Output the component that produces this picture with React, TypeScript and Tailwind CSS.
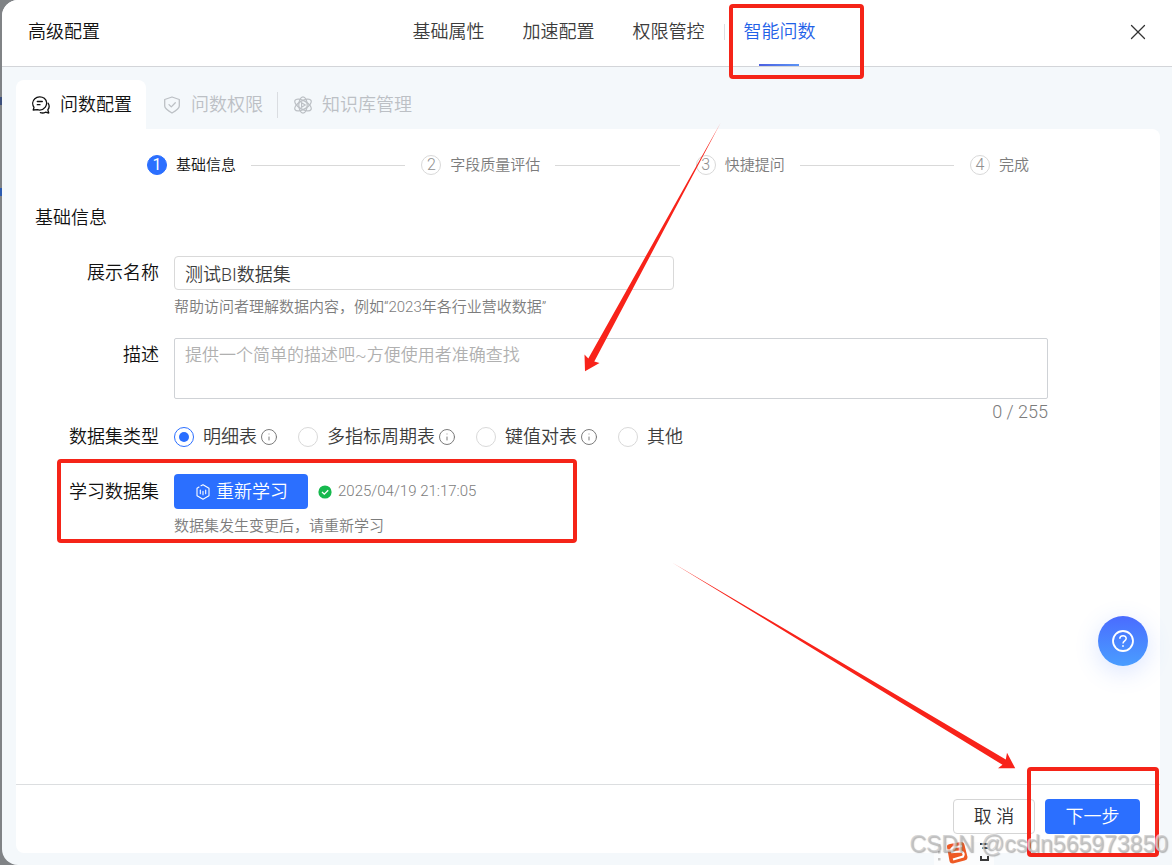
import React, { useState } from "react";
import { Info, X } from "lucide-react";

function ChatIcon() {
  return (
    <svg viewBox="0 0 18 18" className="size-[18px]" fill="none" stroke="currentColor" strokeWidth="1.3" strokeLinecap="round" strokeLinejoin="round" aria-hidden="true">
      <path d="M1.2 14 L2 11.4 C.1 8.6 .3 5 2.800 2.700 C5.500 .3 9.600 .2 12.300 2.300 C15 4.500 15.400 8.400 13.300 11.100 C11.400 13.500 8.200 14.600 5.300 13.700 Z" />
      <path d="M5.300 5.500 H10.300 M5.300 8.700 H8" />
      <path d="M16.200 7.300 C17.500 9.400 17.300 12 15.800 13.900 L16.800 17 L13.500 16.200 C11.800 17.100 10 17.200 8.400 16.600" />
    </svg>
  );
}

function ShieldIcon() {
  return (
    <svg viewBox="0 0 18 18" className="size-[18px]" fill="none" stroke="currentColor" strokeWidth="1.300" strokeLinecap="round" strokeLinejoin="round" aria-hidden="true">
      <path d="M9 1 L16.300 3.500 V10 C16.300 12.400 14 14.200 9 17 C4 14.200 1.700 12.400 1.700 10 V3.500 Z" />
      <path d="M6 8.600 L8.300 10.900 L12.300 6.800" />
    </svg>
  );
}

function AtomIcon() {
  return (
    <svg viewBox="0 0 18 18" className="size-[18px]" fill="none" stroke="currentColor" strokeWidth="1.200" aria-hidden="true">
      <ellipse cx="9" cy="9" rx="4.200" ry="8.200" />
      <ellipse cx="9" cy="9" rx="4.200" ry="9.200" transform="rotate(60 9 9)" />
      <ellipse cx="9" cy="9" rx="4.200" ry="9.200" transform="rotate(-60 9 9)" />
      <path d="M7.600 6.800 L11.200 9 L7.600 11.200 Z" />
    </svg>
  );
}

function LearnIcon() {
  return (
    <svg viewBox="0 0 16 16" className="size-4" fill="none" stroke="currentColor" strokeWidth="1.100" strokeLinecap="round" strokeLinejoin="round" aria-hidden="true">
      <path d="M6 1.700 L8 .8 L14 4.200 V11.800 L8 15.200 L2 11.800 V4.200 L4 3.100" />
      <path d="M5.300 6 V9.800 M8 7.200 V10.800 M10.700 6 V9.800" />
    </svg>
  );
}

const topTabs = ["基础属性", "加速配置", "权限管控"];
const steps = ["基础信息", "字段质量评估", "快捷提问", "完成"];
const kinds = [
  { name: "明细表", info: true },
  { name: "多指标周期表", info: true },
  { name: "键值对表", info: true },
  { name: "其他", info: false },
];

function Highlight({ className }: { className: string }) {
  return <span aria-hidden="true" className={`pointer-events-none absolute z-10 rounded-sm border-4 border-[#f52418] ${className}`} />;
}

function Header() {
  return (
    <header className="flex h-[67px] items-center border-b border-[#d3d5d9] bg-white px-[26px] pb-[3px]">
      <h1 className="flex-1 text-lg text-[#111]">高级配置</h1>
      <nav className="flex items-center pl-[54px] text-lg text-[#3c3c3c]">
        <div className="flex gap-[38px]">
          {topTabs.map((t) => (
            <a key={t} href="#">{t}</a>
          ))}
        </div>
        <span className="mx-[19px] h-4 w-px bg-[#dcdee2]" />
        <a href="#" aria-current="page" className="relative text-[#1f62e8]">
          智能问数
          <span className="absolute top-[46px] left-[15px] h-0.5 w-10 bg-linear-to-r from-[#4b5fe0] to-[#5b93f5]" />
          <Highlight className="-top-[14px] -left-[15px] h-[75px] w-[135px]" />
        </a>
      </nav>
      <div className="flex flex-1 justify-end">
        <button type="button" aria-label="关闭" className="-mr-[5px] text-[#333]">
          <X className="size-[26px]" strokeWidth={1.2} />
        </button>
      </div>
    </header>
  );
}

function SubTabs() {
  return (
    <div className="flex h-[49px] text-lg text-[#bcc0c5]">
      <button type="button" className="flex items-center gap-2.5 rounded-t-lg bg-white pr-[14px] pl-4 text-[#111]">
        <ChatIcon />
        问数配置
      </button>
      <button type="button" className="flex items-center gap-2.5 pl-[17px]">
        <ShieldIcon />
        问数权限
      </button>
      <span className="mr-4 ml-[14px] h-[26px] w-px self-center bg-[#dadde1]" />
      <button type="button" className="flex items-center gap-2.5">
        <AtomIcon />
        知识库管理
      </button>
    </div>
  );
}

function Steps() {
  return (
    <ol className="flex h-6 px-[131px] text-[15px] text-[#7c7c7c]">
      {steps.map((s, i) => (
        <li key={s} className={`flex items-center ${i < 3 ? "flex-1" : ""}`}>
          <span
            className={`mr-[9px] flex size-5 items-center justify-center rounded-full border text-base ${
              i === 0 ? "border-[#2b6fff] bg-[#2b6fff] font-normal text-white" : "border-[#d9d9d9] text-[#8f8f8f]"
            }`}
          >
            {i + 1}
          </span>
          <span className={i === 0 ? "text-[#111]" : ""}>{s}</span>
          {i < 3 && <span className="mr-4 ml-[15px] h-px flex-1 bg-[#d9d9d9]" />}
        </li>
      ))}
    </ol>
  );
}

const row = "grid grid-cols-[143px_1fr] gap-x-[15px]";
const label = "text-right text-lg text-[#111]";

function Form() {
  const [name, setName] = useState("测试BI数据集");
  const [desc, setDesc] = useState("");
  const [kind, setKind] = useState("明细表");
  return (
    <form className="pr-28">
      <h2 className="mt-[29px] pl-[19px] text-lg leading-6 text-[#111]">基础信息</h2>
      <div className={`mt-[26px] ${row}`}>
        <label htmlFor="name" className={`${label} leading-[34px]`}>展示名称</label>
        <div>
          <input
            id="name"
            value={name}
            onChange={(e) => setName(e.target.value)}
            className="block h-[34px] w-full max-w-[500px] rounded border border-[#d9d9d9] px-2.5 text-lg text-[#3c3c3c] outline-none"
          />
          <p className="mt-[5px] text-[15px] leading-6 text-[#7c7c7c]">帮助访问者理解数据内容，例如“2023年各行业营收数据”</p>
        </div>
      </div>
      <div className={`mt-[19px] ${row}`}>
        <label htmlFor="desc" className={`${label} leading-[34px]`}>描述</label>
        <div>
          <textarea
            id="desc"
            value={desc}
            onChange={(e) => setDesc(e.target.value)}
            placeholder="提供一个简单的描述吧~方便使用者准确查找"
            className="block h-[61px] w-full resize-none rounded-xs border border-[#cfd2d6] px-2.5 py-1 text-[17px] leading-6 outline-none placeholder:text-[#b0b0b0]"
          />
          <p className="text-right text-lg leading-[25px] text-[#7c7c7c]">{desc.length} / 255</p>
        </div>
      </div>
      <div className={row} role="radiogroup" aria-labelledby="kind">
        <span id="kind" className={`${label} leading-[25px]`}>数据集类型</span>
        <div className="flex h-[25px] items-center gap-5 text-lg text-[#3c3c3c]">
          {kinds.map((k) => (
            <label key={k.name} className="flex items-center">
              <input
                type="radio"
                name="kind"
                checked={kind === k.name}
                onChange={() => setKind(k.name)}
                className="mr-[9px] grid size-5 appearance-none place-items-center rounded-full border border-[#d9d9d9] before:size-2.5 before:rounded-full checked:border-[#2b6fff] checked:before:bg-[#2b6fff]"
              />
              {k.name}
              {k.info && <Info className="ml-[3px] size-[18px] text-[#777]" strokeWidth={1.3} />}
            </label>
          ))}
        </div>
      </div>
      <div className={`relative mt-[25px] ${row}`}>
        <span className={`${label} leading-[35px]`}>学习数据集</span>
        <div>
          <div className="flex items-center">
            <button type="button" className="flex h-[35px] items-center gap-[5px] rounded bg-[#2b6fff] pr-5 pl-[21px] text-lg text-white">
              <LearnIcon />
              重新学习
            </button>
            <svg viewBox="0 0 14 14" className="mr-1.5 ml-2.5 size-3.5" aria-hidden="true">
              <circle cx="7" cy="7" r="6.600" fill="#16b94e" />
              <path d="M4 7 L6.300 9.200 L10.200 5.200" fill="none" stroke="#fff" strokeWidth="1.300" />
            </svg>
            <time className="text-[15px] text-[#7c7c7c]">2025/04/19 21:17:05</time>
          </div>
          <p className="mt-[5px] text-[15px] leading-6 text-[#7c7c7c]">数据集发生变更后，请重新学习</p>
        </div>
        <Highlight className="-top-[15px] left-[41px] h-[84px] w-[520px]" />
      </div>
    </form>
  );
}

function Footer() {
  return (
    <footer className="relative mt-auto flex h-[69px] items-start justify-end gap-2.5 border-t border-[#dcdee0] pt-3.5 pr-5 text-lg">
      <button type="button" className="h-[35px] w-[82px] rounded border border-[#d5d5d5] bg-white text-[#333]">取 消</button>
      <button type="button" className="h-[35px] w-[95px] rounded bg-[#2b6fff] text-white">下一步</button>
      <Highlight className="-top-[18px] right-px h-[90px] w-[132px]" />
    </footer>
  );
}

function Arrows() {
  return (
    <svg viewBox="0 0 1172 865" className="pointer-events-none absolute top-0 left-0 z-20 h-[865px] w-[1172px]" fill="#f8231a" aria-hidden="true">
      <path d="M720.500 123 L594.300 361.500 L599.500 363 L585 371.300 L584.500 354.500 L588.300 358.500 Z" />
      <path d="M672 562.500 L1005.800 759.500 L1007 752.800 L1015.200 768.200 L998 768.200 L1002.500 764.800 Z" />
    </svg>
  );
}

export default function App() {
  return (
    <div className="relative min-h-screen overflow-hidden bg-[#808386] pl-0.5 font-[Roboto,'Noto_Sans_CJK_SC',sans-serif] font-[350]">
      <span className="absolute top-[97px] left-0 h-2 w-0.5 bg-[#3c4f7c]" />
      <span className="absolute top-[188px] left-0 h-2 w-0.5 bg-[#2c5bb0]" />
      <main className="flex min-h-screen flex-col overflow-hidden rounded-l-2xl bg-[#f4f8fb]">
        <Header />
        <div className="flex flex-1 flex-col px-3.5 pt-[13px] pr-3 pb-3">
          <SubTabs />
          <section className="flex flex-1 flex-col rounded-tr-lg rounded-b-lg bg-white pt-6">
            <Steps />
            <Form />
            <Footer />
          </section>
        </div>
      </main>
      <button
        type="button"
        aria-label="帮助"
        className="absolute right-6 bottom-[199px] flex size-[50px] items-center justify-center rounded-full bg-linear-to-b from-[#4a6bff] to-[#4a9dff] text-white shadow-[0_6px_24px_rgba(74,124,255,0.2)]"
      >
        <svg viewBox="0 0 24 24" className="size-6" fill="none" stroke="currentColor" strokeWidth="1.800" aria-hidden="true">
          <circle cx="12" cy="12" r="10" />
          <path d="M8.800 9.800 C8.800 5.600 15.300 5.700 15.200 9.600 C15.100 11.800 12 11.900 12 14.500" strokeWidth="1.500" />
          <circle cx="12" cy="17" r=".6" fill="currentColor" strokeWidth=".8" />
        </svg>
      </button>
      <Arrows />
      <svg viewBox="0 0 60 24" className="absolute right-[178px] bottom-0 z-20 h-6 w-[60px]" aria-hidden="true">
        <path d="M4 1 H60 V24 H0 V5 Z" fill="#fbfcfd" />
        <path d="M4 3 h2.500 v2.500 h-2.500 z M4 10 h2.500 v2.500 h-2.500 z M4 17 h2.500 v2.500 h-2.500 z" fill="#c5c5c5" />
        <path d="M13 6 Q12.500 3.500 16 3 L27 1 Q30 1 30.500 4 L33.500 16 Q33.500 19 30.500 19.500 L19 22.500 Q16 22.500 15.500 20 Z" fill="#ee5a24" />
        <path d="M28 5 L19 6.500 Q16.500 8 18 11 L27 10.500 Q31 12 29 15.500 L19 18.500" fill="none" stroke="#fff" strokeWidth="2.200" />
        <path d="M46 3 H54 M48 7 H54 M47 15 V19 H54 V15" fill="none" stroke="#3a3a3a" strokeWidth="2" />
      </svg>
      <p className="pointer-events-none absolute right-1 bottom-1 z-30 font-[Liberation_Sans,sans-serif] text-[23px] font-normal text-[#c4c4c4]/70 [text-shadow:1px_1px_1px_rgba(110,110,110,0.5),-1px_-1px_0_rgba(255,255,255,0.6)]">
        CSDN @csdn565973850
      </p>
    </div>
  );
}
